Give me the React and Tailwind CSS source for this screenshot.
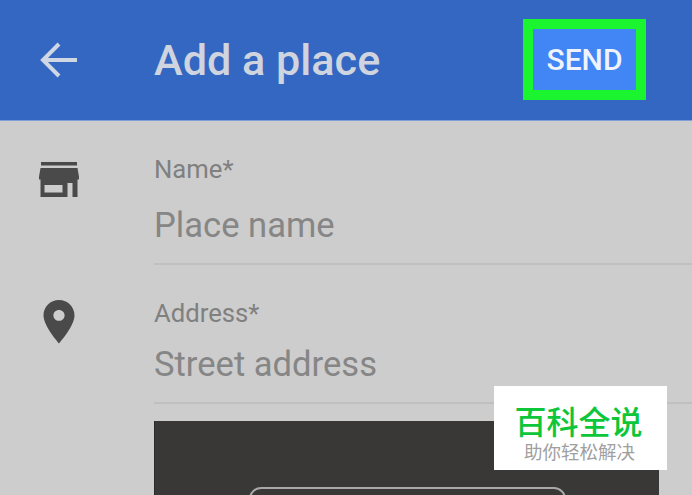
const StoreIcon = () => (
    <svg width="40" height="36" viewBox="0 0 40 36" className="block">
        <path fill="#4a4a4a" d="M3 0h36v3.500H3zM2.500 6h37l2 11.500H0.500zM2.500 17.500h37V35h-5V21H29.500v14H2.500z" transform="translate(-1 0)" />
        <rect x="5.500" y="23" width="18" height="7.500" fill="#cdcdcd" />
    </svg>
);

const PinIcon = () => (
    <svg width="32" height="44" viewBox="0 0 32 44" className="block">
        <path fill="#4a4a4a" fillRule="evenodd" d="M16 0C7.300 0 .5 6.800.5 15.500 .5 26 16 43.500 16 43.500S31.500 26 31.500 15.500C31.500 6.800 24.700 0 16 0zM16 10c3.100 0 5.600 2.400 5.600 5.400s-2.500 5.400-5.600 5.400-5.600-2.400-5.600-5.400S12.900 10 16 10z" />
    </svg>
);

const Field = ({ label, placeholder, height, inputGap }) => (
    <div className={`flex flex-col border-b-2 border-[#c0c0c0] ${height}`}>
        <div className="text-[25.7px] leading-[28px] text-[#808080]">{label}</div>
        <div className={`${inputGap} text-[34.6px] leading-[40px] text-[#868686]`}>{placeholder}</div>
    </div>
);

export default function App() {
    return (
        <div className="relative w-[692px] h-[495px] overflow-hidden bg-[#cdcdcd] font-['Roboto',sans-serif]">
            {/* Header */}
            <div className="h-[121px] bg-[#3367c1] border-b border-[#7f9fd6] flex items-center">
                <svg width="38" height="36" viewBox="0 0 38 36" className="ml-[40px] mt-[-1px]" fill="none" stroke="#cfd6e4" strokeWidth="4">
                    <path d="M37 18H4M19 2L3 18l16 16" />
                </svg>
                <h1 className="ml-[76px] w-[228px] text-[43.200px] font-medium leading-none text-[#cfd4de] mt-[1px] whitespace-nowrap">Add a place</h1>
                <div className="ml-[141px] mt-[-2px] w-[123px] h-[81px] border-[10px] border-[#1bf52f] bg-[#4285f4] flex items-center justify-center">
                    <span className="text-[30px] font-medium text-[#eef3fc]">SEND</span>
                </div>
            </div>

            {/* Form */}
            <div className="flex">
                <div className="w-[154px] shrink-0 flex flex-col">
                    <div className="ml-[39px] mt-[41px]"><StoreIcon /></div>
                    <div className="ml-[43px] mt-[102px]"><PinIcon /></div>
                </div>
                <div className="flex-1">
                    <Field label="Name*" placeholder="Place name" height="h-[144px] pt-[34px]" inputGap="mt-[22px]" />
                    <Field label="Address*" placeholder="Street address" height="h-[139px] pt-[34px]" inputGap="mt-[17px]" />
                    <div className="mt-[17px] w-[505px] h-[90px] bg-[#3a3836] border-l border-[#2a2a2a] pt-[66px]">
                        <div className="ml-[94px] w-[317px] h-[30px] rounded-t-[12px] border-2 border-[#a8a8a8]" />
                    </div>
                </div>
            </div>

            {/* Watermark */}
            <div className="absolute left-[494px] top-[386px] w-[173px] h-[84px] bg-white flex flex-col items-center pt-[18px] font-['Noto_Sans_CJK_SC',sans-serif]">
                <div className="text-[32px] leading-[32px] font-medium text-[#0ec63a] ml-[-4px]">百科全说</div>
                <div className="text-[18.500px] leading-[20px] mt-[5px] text-[#a0a0a0] ml-[-2px]">助你轻松解决</div>
            </div>
        </div>
    );
}
